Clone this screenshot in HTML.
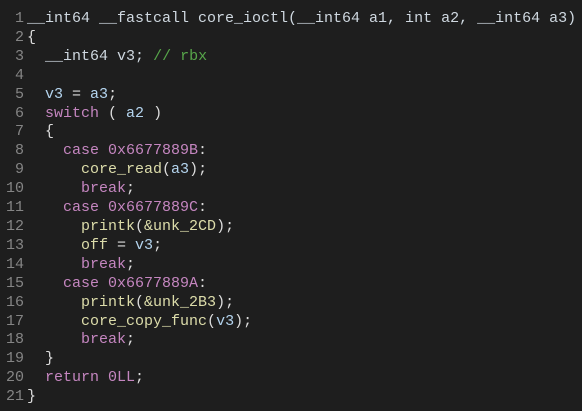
<!DOCTYPE html>
<html><head><style>
html,body{margin:0;padding:0;background:#1e1e1e;width:582px;height:411px;overflow:hidden}
pre{margin:0;position:absolute;top:10px;left:0;font-family:"Liberation Mono",monospace;font-size:15px;line-height:18.9px;color:#dcdcdc}
.n{color:#858585;display:inline-block;width:24px;text-align:right;margin-right:3px}
.k{color:#c586c0}.f{color:#dcdcaa}.v{color:#b4d4ee}.c{color:#57a64a}.t{color:#cfd8e0}
</style></head><body>
<pre><span class="n">1</span><span class="t">__int64 __fastcall core_ioctl(__int64 a1, int a2, __int64 a3)</span>
<span class="n">2</span>{
<span class="n">3</span>  <span class="t">__int64 v3;</span> <span class="c">// rbx</span>
<span class="n">4</span>
<span class="n">5</span>  <span class="v">v3</span> = <span class="v">a3</span>;
<span class="n">6</span>  <span class="k">switch</span> ( <span class="v">a2</span> )
<span class="n">7</span>  {
<span class="n">8</span>    <span class="k">case 0x6677889B</span>:
<span class="n">9</span>      <span class="f">core_read</span>(<span class="v">a3</span>);
<span class="n">10</span>      <span class="k">break</span>;
<span class="n">11</span>    <span class="k">case 0x6677889C</span>:
<span class="n">12</span>      <span class="f">printk</span>(<span class="f">&amp;unk_2CD</span>);
<span class="n">13</span>      <span class="f">off</span> = <span class="v">v3</span>;
<span class="n">14</span>      <span class="k">break</span>;
<span class="n">15</span>    <span class="k">case 0x6677889A</span>:
<span class="n">16</span>      <span class="f">printk</span>(<span class="f">&amp;unk_2B3</span>);
<span class="n">17</span>      <span class="f">core_copy_func</span>(<span class="v">v3</span>);
<span class="n">18</span>      <span class="k">break</span>;
<span class="n">19</span>  }
<span class="n">20</span>  <span class="k">return 0LL</span>;
<span class="n">21</span>}</pre>
</body></html>
